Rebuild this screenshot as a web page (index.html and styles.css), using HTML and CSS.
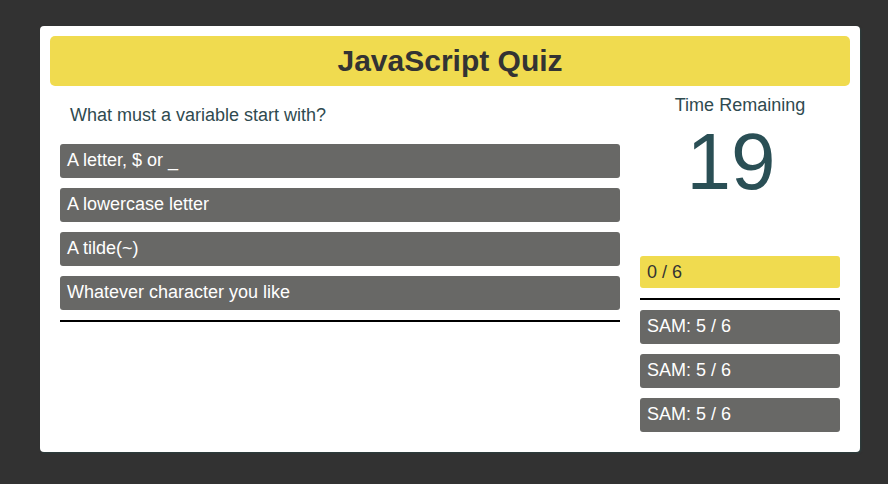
FILE: index.html
```html
<!DOCTYPE html>
<html>
<head>
<meta charset="utf-8">
<link rel="stylesheet" href="styles.css">
</head>
<body>
<div class="card">
  <header class="header"><h1 class="title">JavaScript Quiz</h1></header>
  <div class="content">
    <section class="quiz">
      <p class="question">What must a variable start with?</p>
      <div class="answers">
        <div class="answer">A letter, $ or _</div>
        <div class="answer">A lowercase letter</div>
        <div class="answer">A tilde(~)</div>
        <div class="answer">Whatever character you like</div>
      </div>
      <div class="rule"></div>
    </section>
    <aside class="side">
      <div class="time-label">Time Remaining</div>
      <div class="timer">19</div>
      <div class="score">0 / 6</div>
      <div class="rule"></div>
      <div class="scores">
        <div class="entry">SAM: 5 / 6</div>
        <div class="entry">SAM: 5 / 6</div>
        <div class="entry">SAM: 5 / 6</div>
      </div>
    </aside>
  </div>
</div>
</body>
</html>
```
FILE: styles.css
```css
html, body {
  margin: 0;
  padding: 0;
  background: #323232;
}
body {
  padding: 26px 40px;
  font-family: "Liberation Sans", Arial, sans-serif;
}
.card {
  width: 820px;
  height: 426px;
  box-sizing: border-box;
  background: #fff;
  border-radius: 4px;
  padding: 10px;
  box-shadow: 1px 1px 2px #2c3f3f;
}
.header {
  height: 50px;
  background: #f0db4f;
  border-radius: 5px;
  display: flex;
  align-items: center;
  justify-content: center;
}
.title {
  margin: 0;
  font-size: 30px;
  font-weight: bold;
  color: #333;
  line-height: 1;
}
.content {
  display: flex;
  gap: 20px;
  padding: 0 10px;
}
.quiz {
  width: 560px;
}
.question {
  margin: 19px 0 0;
  padding-left: 10px;
  font-size: 18px;
  line-height: 21px;
  color: #2f4a4f;
}
.answers {
  margin-top: 18px;
  display: flex;
  flex-direction: column;
  gap: 10px;
}
.answer, .entry {
  height: 34px;
  line-height: 33px;
  padding-left: 7px;
  background: #686866;
  color: #fff;
  font-size: 18px;
  border-radius: 3px;
}
.rule {
  height: 2px;
  background: #000;
  margin-top: 10px;
}
.side {
  width: 200px;
}
.time-label {
  margin-top: 9px;
  text-align: center;
  font-size: 18px;
  line-height: 21px;
  color: #2f4a4f;
}
.timer {
  margin-top: 6px;
  height: 80px;
  font-size: 80px;
  line-height: 80px;
  text-align: center;
  padding-right: 18px;
  color: #2a4f55;
}
.score {
  margin-top: 54px;
  height: 32px;
  line-height: 33px;
  padding-left: 7px;
  background: #f0db4f;
  color: #333;
  font-size: 18px;
  border-radius: 3px;
}
.scores {
  margin-top: 10px;
  display: flex;
  flex-direction: column;
  gap: 10px;
}
```
